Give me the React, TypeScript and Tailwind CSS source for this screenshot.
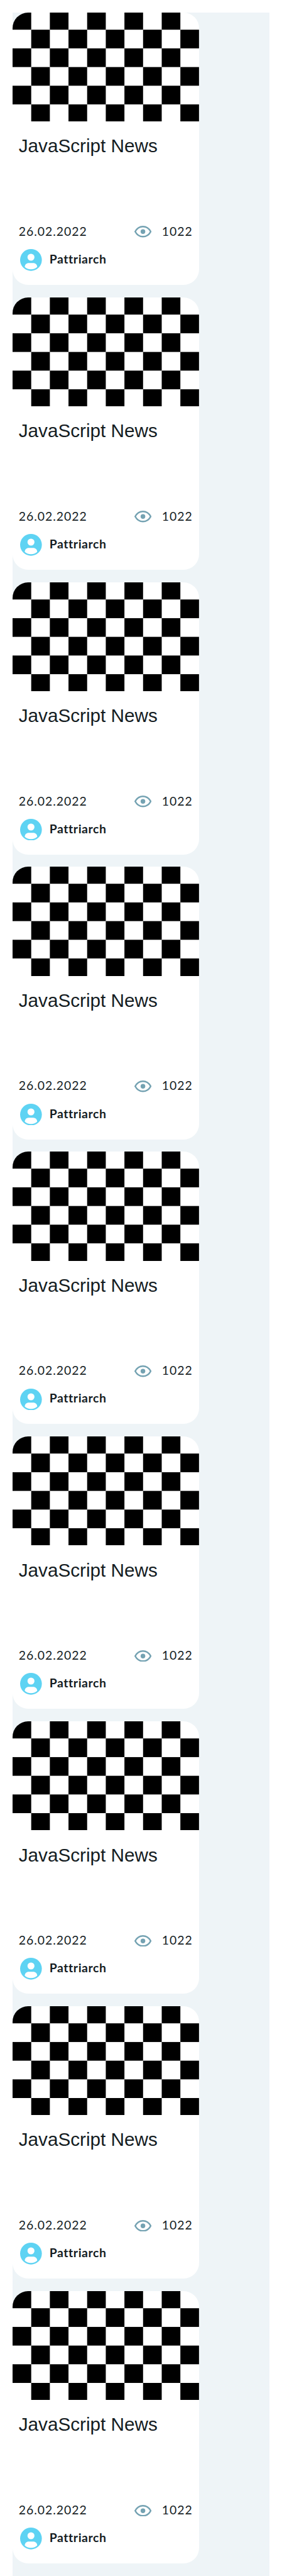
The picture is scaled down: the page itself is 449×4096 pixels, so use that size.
import React from "react";

type Article = { title: string; date: string; views: number; author: string };

const articles: Article[] = Array.from({ length: 9 }, () => ({
  title: "JavaScript News",
  date: "26.02.2022",
  views: 1022,
  author: "Pattriarch",
}));

const ROWS = [0, 1, 2, 3, 4, 5];
const COLS = [0, 1, 2, 3, 4, 5, 6, 7, 8, 9];

function Checkerboard() {
  return (
    <svg
      className="block h-[173.24px] w-full"
      viewBox="0 4 480 280"
      preserveAspectRatio="none"
      aria-hidden="true"
    >
      {ROWS.map((row) =>
        COLS.filter((col) => (row + col) % 2 === 0).map((col) => (
          <rect key={`${row}-${col}`} x={col * 48} y={row * 48} width="48" height="48" fill="#000" />
        )),
      )}
    </svg>
  );
}

function EyeIcon() {
  return (
    <svg className="h-[18.56px] w-[27.21px]" viewBox="0 0 44 30" fill="none" aria-hidden="true">
      <path
        d="M2 15C6.2 7.2 13.4 2 22 2s15.800 5.200 20 13c-4.200 7.800-11.400 13-20 13S6.200 22.800 2 15Z"
        stroke="#74a2b2"
        strokeWidth="4"
        strokeLinejoin="round"
      />
      <circle cx="22" cy="15" r="6" fill="#74a2b2" />
    </svg>
  );
}

function AvatarIcon() {
  return (
    <svg className="size-[34.65px]" viewBox="0 0 56 56" aria-hidden="true">
      <circle cx="28" cy="28" r="28" fill="#5ed3f3" />
      <circle cx="28" cy="21" r="9" fill="#fff" />
      <path d="M12 46c0-6 4.500-10 10.500-10h11C39.500 36 44 40 44 46c-3.500 3.700-9.300 6-16 6s-12.500-2.300-16-6Z" fill="#fff" />
    </svg>
  );
}

function ArticleCard({ article }: { article: Article }) {
  return (
    <article className="h-[433.1px] w-[296.86px] overflow-hidden rounded-[24.7px] bg-white">
      <Checkerboard />
      <div className="px-[9.9px]">
        <h2 className="mt-[19.2px] font-['Liberation_Sans',sans-serif] text-[29.7px] leading-[40px] whitespace-nowrap">
          {article.title}
        </h2>
        <div className="mt-[102.5px] flex h-[28px] items-center">
          <span className="pb-[2px] text-[19.4px] leading-[24px] tracking-[1px]">{article.date}</span>
          <div className="ml-auto flex items-center gap-[16.6px]">
            <EyeIcon />
            <span className="pb-[2px] text-[19.4px] leading-[24px] tracking-[1px]">{article.views}</span>
          </div>
        </div>
        <div className="mt-[13.3px] flex items-center gap-[12px] pl-[2.5px]">
          <AvatarIcon />
          <span className="pb-[3px] text-[19.4px] leading-[24px] font-bold tracking-[0.55px]">
            {article.author}
          </span>
        </div>
      </div>
    </article>
  );
}

export default function App() {
  return (
    <div className="h-[4096px] w-[449px] bg-white pt-[19.8px] pl-[19.8px] font-[Lato,sans-serif] text-[#141c1f]">
      <main className="flex h-full w-[409.4px] flex-col gap-[19.8px] bg-[#eef4f7]">
        {articles.map((article, index) => (
          <ArticleCard key={index} article={article} />
        ))}
      </main>
    </div>
  );
}
